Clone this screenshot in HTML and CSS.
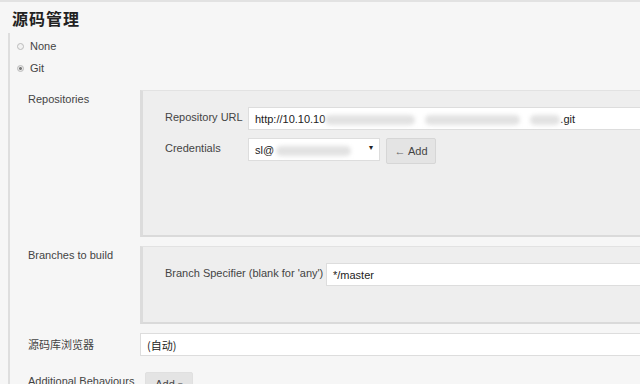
FILE: index.html
```html
<!DOCTYPE html>
<html lang="zh-CN">
<head>
    <meta charset="UTF-8">
    <title>源码管理</title>
    <link rel="stylesheet" href="styles.css">
</head>
<body>
    <div class="page">
        <h2 class="section-title">源码管理</h2>

        <div class="section">
            <div class="radio-row"><span class="radio"></span>None</div>
            <div class="radio-row"><span class="radio checked"></span>Git</div>

            <div class="config-row first">
                <div class="row-label">Repositories</div>
                <div class="panel panel-repo">
                    <div class="field">
                        <label class="field-label url-label">Repository URL</label>
                        <div class="input wide">http://10.10.10<span class="blur b1"></span><span class="blur b2"></span><span class="blur b3"></span>.git</div>
                    </div>
                    <div class="field">
                        <label class="field-label url-label">Credentials</label>
                        <div class="input select-cred">sl@<span class="blur b4"></span><span class="caret">▾</span></div>
                        <button class="btn btn-add"><span class="key">&#x2190;</span> Add</button>
                    </div>
                </div>
            </div>

            <div class="config-row">
                <div class="row-label">Branches to build</div>
                <div class="panel panel-branch">
                    <div class="field">
                        <label class="field-label branch-label">Branch Specifier (blank for 'any')</label>
                        <div class="input wide">*/master</div>
                    </div>
                </div>
            </div>

            <div class="config-row browser-row">
                <div class="row-label cjk">源码库浏览器</div>
                <div class="input full">(自动)</div>
            </div>

            <div class="config-row last">
                <div class="row-label">Additional Behaviours</div>
                <button class="btn btn-menu">Add <span class="tri">▾</span></button>
            </div>
        </div>
    </div>
</body>
</html>
```

FILE: styles.css
```css
body {
    margin: 0;
    background-color: #f6f6f6;
    font-family: "Liberation Sans", Arial, "Noto Sans CJK SC", sans-serif;
    font-size: 11px;
    color: #444;
}

.page {
    width: 640px;
    height: 384px;
    overflow: hidden;
    border-top: 2px solid #e2e2e2;
    box-sizing: border-box;
}

.section-title {
    margin: 0;
    padding: 4px 0 0 12px;
    height: 27px;
    font-family: "Noto Sans CJK SC", sans-serif;
    font-size: 16px;
    font-weight: bold;
    color: #222;
    letter-spacing: 1px;
}

.section {
    margin-left: 8px;
    border-left: 2px solid #dedede;
    padding-top: 2px;
    margin-right: -30px;
}

.radio-row {
    display: flex;
    align-items: center;
    height: 22px;
    padding-left: 7px;
}

.radio {
    width: 5px;
    height: 5px;
    border: 1px solid #bbb;
    border-radius: 50%;
    background: #f2f2f2;
    margin-right: 6px;
}

.radio.checked {
    background: radial-gradient(circle, #777 35%, #e8e8e8 45%);
}

.config-row {
    display: flex;
    margin-top: 9px;
}

.config-row.first {
    margin-top: 11px;
}

.config-row.last {
    margin-top: 16px;
}

.row-label {
    width: 112px;
    padding-left: 18px;
    padding-top: 3px;
    flex-shrink: 0;
}

.cjk {
    font-family: "Noto Sans CJK SC", sans-serif;
}

.panel {
    flex: 1;
    background-color: #eeeeee;
    border-left: 3px solid #dcdcdc;
    border-top: 1px solid #e2e2e2;
    border-bottom: 2px solid #dadada;
    padding: 16px 0 0 22px;
}

.panel-repo {
    height: 128px;
}

.panel-branch {
    height: 59px;
}

.field {
    display: flex;
    align-items: flex-start;
    margin-bottom: 8px;
}

.field-label {
    padding-top: 4px;
}

.url-label {
    width: 83px;
}

.branch-label {
    width: 161px;
}

.input {
    box-sizing: border-box;
    height: 23px;
    padding: 5px 6px;
    background: #fff;
    border: 1px solid #ddd;
    color: #222;
    white-space: nowrap;
    position: relative;
}

.wide {
    flex: 1;
}

.full {
    flex: 1;
    font-family: "Noto Sans CJK SC", sans-serif;
    padding-top: 3px;
}

.blur {
    display: inline-block;
    height: 10px;
    vertical-align: middle;
    background: #e2e2e2;
    border-radius: 5px;
    filter: blur(2px);
}

.b1 { width: 90px; margin-right: 10px; }
.b2 { width: 95px; margin-right: 10px; }
.b3 { width: 30px; }
.b4 { width: 75px; margin-left: 2px; }

.select-cred {
    width: 132px;
}

.caret {
    position: absolute;
    right: 6px;
    top: 4px;
    font-size: 8px;
}

.btn {
    font-family: "Liberation Sans", Arial, sans-serif;
    font-size: 11px;
    color: #444;
    background: #e4e4e4;
    border: 1px solid #d6d6d6;
    border-radius: 2px;
    cursor: pointer;
}

.btn-add {
    margin-left: 6px;
    width: 50px;
    height: 26px;
    padding: 0;
}

.key {
    color: #666;
}

.browser-row .row-label {
    padding-top: 3px;
}

.btn-menu {
    margin-left: 5px;
    height: 24px;
    width: 48px;
    padding: 0;
    border-color: #e0e0e0;
}

.tri {
    font-size: 9px;
}
```
